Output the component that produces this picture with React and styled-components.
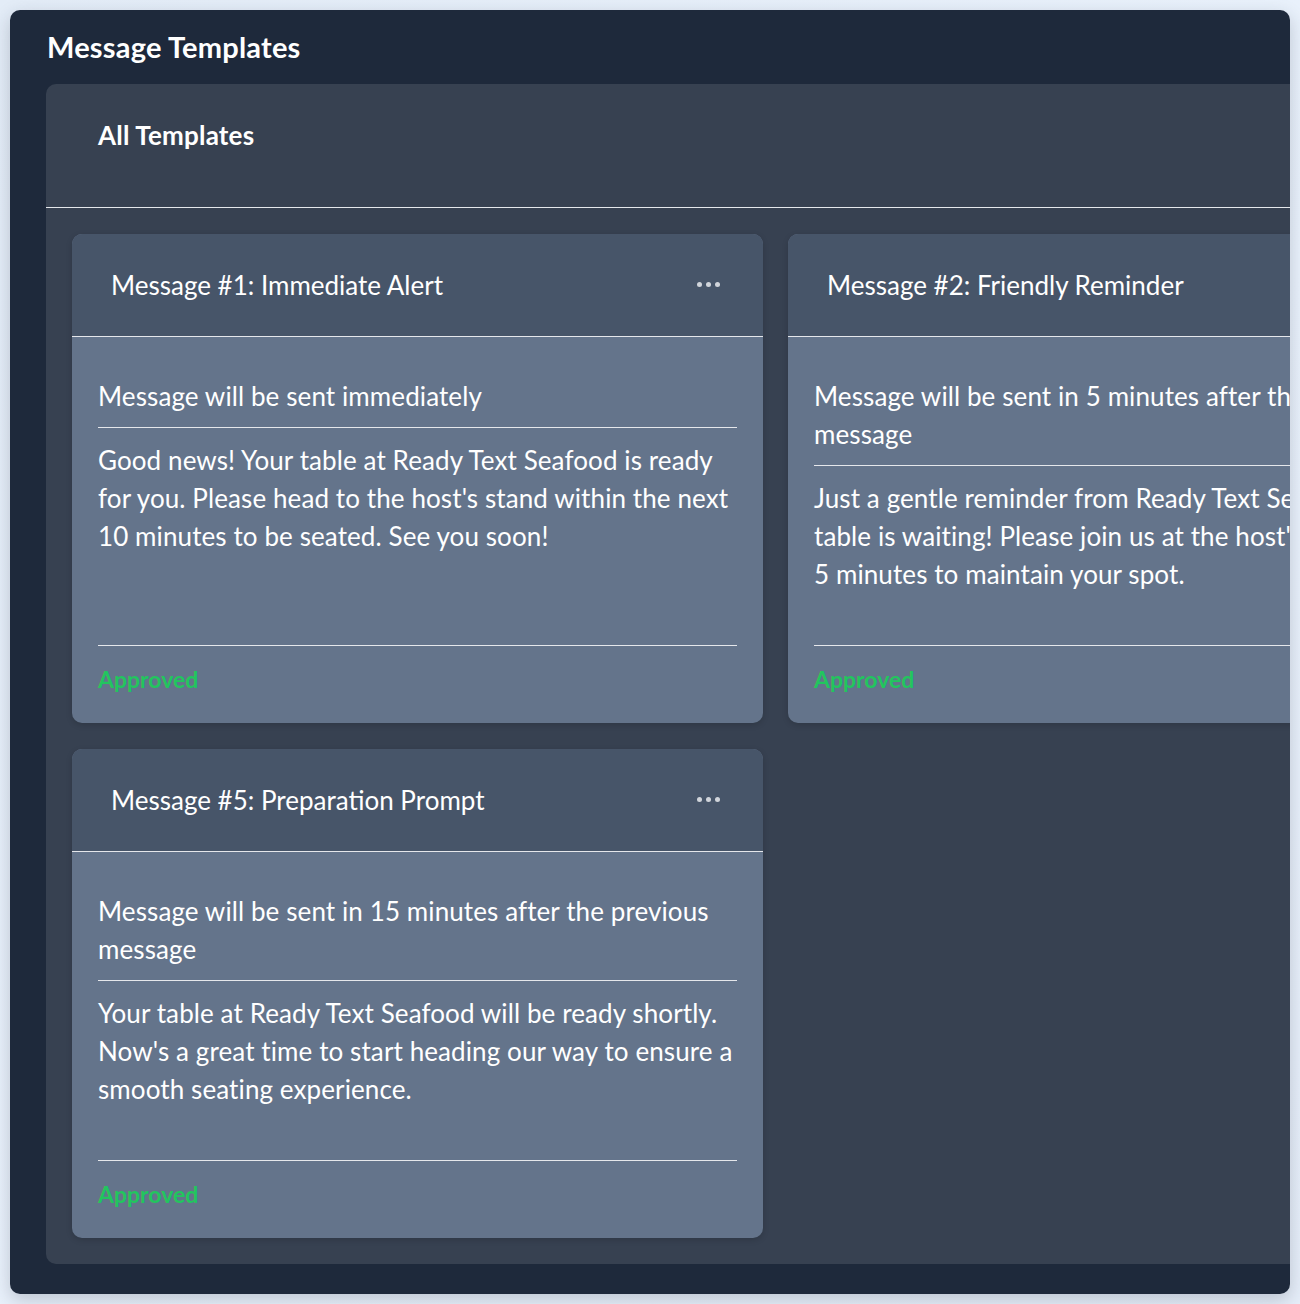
import React from "react";
import styled, { createGlobalStyle } from "styled-components";

const GlobalStyle = createGlobalStyle`
  html, body { margin: 0; padding: 0; }
  body {
    background: linear-gradient(135deg, #e3ecf7 0%, #eaf2fc 60%, #e6eef9 100%);
    font-family: "Lato", "Noto Sans", sans-serif;
    color: #ffffff;
  }
  * { box-sizing: border-box; }
`;

const Page = styled.div`
  padding: 10px;
  height: 1304px;
`;

const Shell = styled.section`
  background: #1e293b;
  border-radius: 10px;
  height: 1284px;
  overflow: hidden;
  box-shadow: 0 6px 18px rgba(30, 41, 59, 0.22);
  display: flex;
  flex-direction: column;
  padding: 0 0 30px 36px;
`;

const PageTitle = styled.h1`
  margin: 0;
  height: 74px;
  flex-shrink: 0;
  display: flex;
  align-items: center;
  padding: 0 0 2px 1px;
  font-size: 29px;
  font-weight: 700;
  letter-spacing: 0.2px;
`;

const Panel = styled.div`
  background: #374151;
  border-radius: 10px 0 0 10px;
  flex: 1;
  display: flex;
  flex-direction: column;
  min-width: 0;
  min-height: 0;
`;

const PanelHeader = styled.div`
  height: 124px;
  flex-shrink: 0;
  padding: 35px 52px 0;
  border-bottom: 1px solid #e5e7eb;
  font-size: 26px;
  font-weight: 700;
  line-height: 32px;
  letter-spacing: 0.2px;
`;

const Grid = styled.div`
  display: grid;
  grid-template-columns: repeat(2, 691px);
  column-gap: 25px;
  row-gap: 26px;
  padding: 26px 26px 27px;
  align-content: start;
`;

const Card = styled.article`
  background: #64748b;
  border-radius: 10px;
  overflow: hidden;
  display: flex;
  flex-direction: column;
  box-shadow: 0 2px 6px rgba(0, 0, 0, 0.15);
`;

const CardHeader = styled.header`
  background: #475569;
  height: 103px;
  border-bottom: 1px solid #e5e7eb;
  display: flex;
  align-items: center;
  justify-content: space-between;
  padding: 0 43px 0 39px;
`;

const CardTitle = styled.h2`
  margin: 0;
  font-size: 26px;
  font-weight: 400;
  line-height: 32px;
`;

const MenuButton = styled.button`
  background: none;
  border: 0;
  padding: 0 0 2px;
  display: flex;
  gap: 4px;
  cursor: pointer;
`;

const Dot = styled.span`
  width: 5px;
  height: 5px;
  border-radius: 50%;
  background: #d1d5db;
`;

const CardBody = styled.div`
  flex: 1;
  display: flex;
  flex-direction: column;
  padding: 40px 26px 0;
`;

const Schedule = styled.p`
  margin: 0;
  padding-bottom: 12px;
  border-bottom: 1px solid #e5e7eb;
  font-size: 26px;
  line-height: 38px;
  letter-spacing: 0.1px;
`;

const Content = styled.p`
  margin: 0;
  flex: 1;
  padding: 13px 0 52px;
  font-size: 26px;
  line-height: 38px;
  letter-spacing: 0.1px;
`;

const Footer = styled.div`
  border-top: 1px solid #e5e7eb;
  padding: 19px 0 30px;
  font-size: 23px;
  font-weight: 700;
  line-height: 28px;
  color: #22c55e;
`;

const templates = [
  {
    id: 1,
    title: "Message #1: Immediate Alert",
    schedule: "Message will be sent immediately",
    text: "Good news! Your table at Ready Text Seafood is ready for you. Please head to the host's stand within the next 10 minutes to be seated. See you soon!",
  },
  {
    id: 2,
    title: "Message #2: Friendly Reminder",
    schedule: "Message will be sent in 5 minutes after the previous message",
    text: "Just a gentle reminder from Ready Text Seafood: your table is waiting! Please join us at the host's stand within 5 minutes to maintain your spot.",
  },
  {
    id: 5,
    title: "Message #5: Preparation Prompt",
    schedule: "Message will be sent in 15 minutes after the previous message",
    text: "Your table at Ready Text Seafood will be ready shortly. Now's a great time to start heading our way to ensure a smooth seating experience.",
  },
];

function TemplateCard({ t }) {
  return (
    <Card>
      <CardHeader>
        <CardTitle>{t.title}</CardTitle>
        <MenuButton aria-label="More options">
          <Dot />
          <Dot />
          <Dot />
        </MenuButton>
      </CardHeader>
      <CardBody>
        <Schedule>{t.schedule}</Schedule>
        <Content>{t.text}</Content>
        <Footer>Approved</Footer>
      </CardBody>
    </Card>
  );
}

export default function App() {
  return (
    <>
      <GlobalStyle />
      <Page>
        <Shell>
          <PageTitle>Message Templates</PageTitle>
          <Panel>
            <PanelHeader>All Templates</PanelHeader>
            <Grid>
              {templates.map((t) => (
                <TemplateCard key={t.id} t={t} />
              ))}
            </Grid>
          </Panel>
        </Shell>
      </Page>
    </>
  );
}
